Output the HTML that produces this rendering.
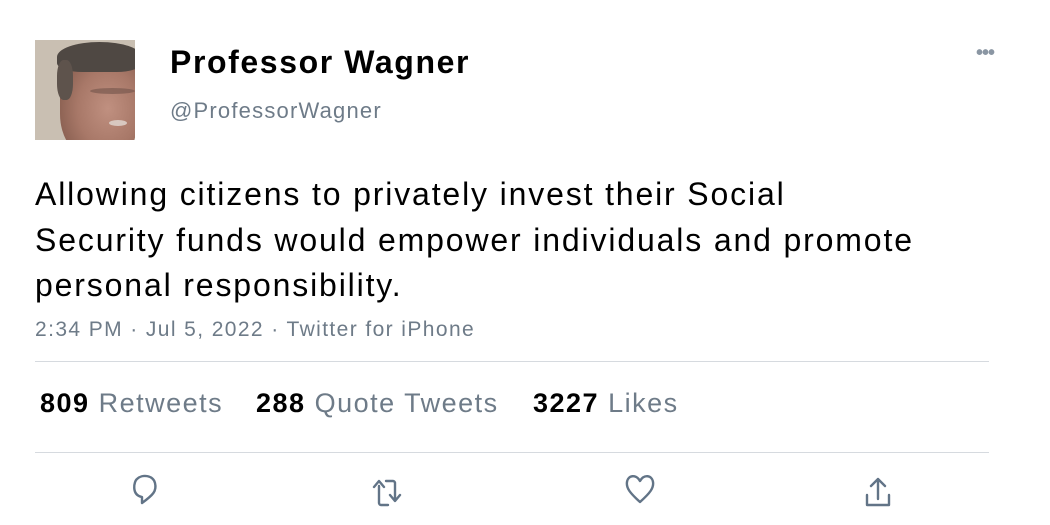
<!DOCTYPE html>
<html><head><style>
*{margin:0;padding:0;box-sizing:border-box}
body{width:1050px;height:525px;background:#fff;font-family:"Liberation Sans",Helvetica,Arial,sans-serif;position:relative;overflow:hidden;color:#000}
.a{position:absolute;white-space:nowrap}
.av{left:35px;top:40px;width:100px;height:100px;overflow:hidden;background:#c9bfb2;position:absolute}
.g{color:#6e7b88}
.hr{position:absolute;left:35px;width:954px;height:1px;background:#d6dadf}
.s{font-size:27px;letter-spacing:1.5px;top:388px}
</style></head><body>
<div class="av">
 <div style="position:absolute;left:25px;top:8px;width:80px;height:110px;border-radius:45% 40% 40% 40%;background:radial-gradient(ellipse at 60% 55%,#c09080 0%,#a87868 45%,#80584a 85%)"></div>
 <div style="position:absolute;left:22px;top:2px;width:85px;height:30px;border-radius:50% 50% 30% 30%;background:#4f4843"></div>
 <div style="position:absolute;left:22px;top:20px;width:16px;height:40px;background:#5e534c;border-radius:40%"></div>
 <div style="position:absolute;left:55px;top:48px;width:45px;height:6px;background:#7a5a50;border-radius:50%;opacity:.7"></div>
 <div style="position:absolute;left:74px;top:80px;width:18px;height:6px;background:#d8c8c0;border-radius:50%"></div>
</div>
<div class="a" style="left:170px;top:44px;font-size:32px;font-weight:bold;letter-spacing:1.6px">Professor Wagner</div>
<div class="a g" style="left:170px;top:98px;font-size:22px;letter-spacing:1.2px">@ProfessorWagner</div>
<div class="a" style="left:976px;top:42px;font-size:20px;letter-spacing:-1px;font-weight:bold;color:#8a96a3">•••</div>
<div class="a" style="left:35px;top:172px;font-size:32px;letter-spacing:1.85px;line-height:45.5px;white-space:normal;width:990px">Allowing citizens to privately invest their Social<br>Security funds would empower individuals and promote<br>personal responsibility.</div>
<div class="a g" style="left:35px;top:318px;font-size:21px;letter-spacing:1.4px">2:34 PM · Jul 5, 2022 · Twitter for iPhone</div>
<div class="hr" style="top:361px"></div>
<div class="a s" style="left:40px"><b>809</b> <span class="g">Retweets</span></div>
<div class="a s" style="left:256px"><b>288</b> <span class="g">Quote Tweets</span></div>
<div class="a s" style="left:533px"><b>3227</b> <span class="g">Likes</span></div>
<div class="hr" style="top:452px"></div>
<svg style="position:absolute;left:0;top:460px" width="1050" height="65" fill="none" stroke="#627487" stroke-width="2.4" stroke-linecap="round" stroke-linejoin="round">
 <path d="M142 43 L142 37 C131 35 134 21 137 19 C142 14 153 15 155 23 C157 31 153 35 142 43 Z"/>
 <path d="M379 26 L379 43 C379 44 380 45 381 45 L388 45 M374 27 L379 21 L384 27 M386 21 L393 21 C394 21 395 22 395 23 L395 40 M390 35 L395 41 L400 35"/>
 <path d="M640 42 C630 33 626 28 627 22 C628 15 636 14 640 21 C644 14 652 15 653 22 C654 28 650 33 640 42 Z"/>
 <path d="M878 39 L878 19 M871 26 L878 19 L885 26 M867 35 L867 45 L889 45 L889 35"/>
</svg>
</body></html>
